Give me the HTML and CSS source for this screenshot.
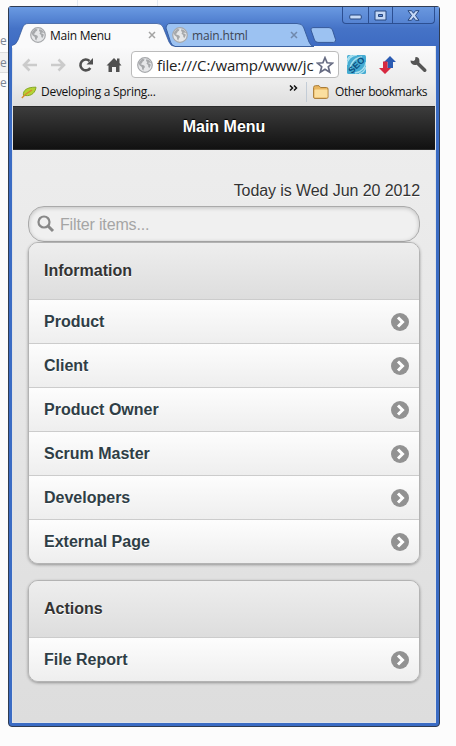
FILE: index.html
```html
<!DOCTYPE html>
<html lang="en">
<head>
    <meta charset="UTF-8">
    <meta name="viewport" content="width=device-width, initial-scale=1.0">
    <title>Main Menu</title>
    <link rel="stylesheet" href="styles.css">
</head>
<body>
    <svg width="0" height="0" class="defs">
        <symbol id="globe" viewBox="0 0 16 16">
            <circle cx="8" cy="8" r="7.3" fill="#e6e7e9" stroke="#a6a8ab" stroke-width="1.2"/>
            <path d="M2.500 4.500 5 2l2.500.2L7 3.800l-1.500 1-.5 1.500L3.500 7l1.500.8 2.200.7.8 1.500-1 1.300-.8 2.500-1-1.500-.4-2.200L2.500 8.300 1.800 6.500zM9.500 2l3 1.500 1.800 2.700-2.300-.7-.8.7 2.300.8.2 1.500-1.500 2.800-1-1.800V8L9.500 6.800l.8-1.800L9 4z" fill="#a6a8ab"/>
        </symbol>
        <symbol id="close" viewBox="0 0 8 8">
            <path d="M1 1 7 7M7 1 1 7" stroke="currentColor" stroke-width="1.5" fill="none"/>
        </symbol>
        <symbol id="arrow" viewBox="0 0 18 18">
            <circle cx="9" cy="9" r="9" fill="#929292"/>
            <path d="M7 4.500 11.500 9 7 13.500" stroke="#fff" stroke-width="3" fill="none"/>
        </symbol>
    </svg>

    <!-- page behind the window -->
    <div class="behind">
        <span>e</span>
        <span class="shade">e</span>
        <span>e</span>
    </div>

    <div class="window">
        <div class="titlebar">
            <div class="controls">
                <div class="control"><svg width="13" height="6"><rect x=".75" y="1" width="11.500" height="4" rx="1" fill="#c5d9f6" stroke="#27477f"/></svg></div>
                <div class="control mid"><svg width="13" height="11"><path d="M1 1h11v9H1zM4.500 4.500v2h4v-2z" fill="#c5d9f6" stroke="#27477f" fill-rule="evenodd"/></svg></div>
                <div class="control last"><svg width="13" height="11"><path d="M1 .7h3.500l2 2.600 2-2.600H12L8.500 5.500l3.500 4.800H8.500l-2-2.700-2 2.700H1l3.500-4.800z" fill="#c5d9f6" stroke="#27477f"/></svg></div>
            </div>
            <div class="tabs">
                <div class="tab active">
                    <svg class="tab-shape" width="164" height="25"><path d="M0 25v-2.500Q4 22 6 17L10.500 5Q12 .5 16 .5H145Q149.500 .5 151 4L157 19Q159 23.500 163 23.500V25z" fill="#fafafb"/><path d="M0 22.500Q4 22 6 17L10.500 5Q12 .5 16 .5H145Q149.500 .5 151 4L157 19Q159 23.500 163 23.500" fill="none" stroke="#36599a" stroke-opacity=".75"/></svg>
                    <svg class="favicon" width="16" height="16"><use href="#globe"/></svg>
                    <span class="tab-title">Main Menu</span>
                    <svg class="tab-close" width="8" height="8"><use href="#close"/></svg>
                </div>
                <div class="tab other">
                    <svg class="tab-shape" width="152" height="24"><path d="M1 5Q1.500 .5 5 .5H132Q137 .5 138.500 4L144 19Q146 23.500 149 23.500H10Q7 23 5.500 19z" fill="#9cc2f2" stroke="#3b609f"/></svg>
                    <svg class="favicon" width="16" height="16"><use href="#globe"/></svg>
                    <span class="tab-title">main.html</span>
                    <svg class="tab-close" width="8" height="8"><use href="#close"/></svg>
                </div>
                <svg class="new-tab" width="27" height="16"><path d="M3 .6H19Q21.500.6 22.500 3L25.600 12.500Q26 15.400 23.500 15.400H8Q5.500 15.400 4.500 13L1 3Q.500 .6 3 .6z" fill="#9cc2f2" stroke="#36599a"/></svg>
            </div>
        </div>

        <div class="browser">
            <div class="toolbar">
                <svg class="nav" width="16" height="14"><path d="M7.500 1.500 2 7l5.500 5.500M2 7h13" fill="none" stroke="#cbcbcb" stroke-width="2.600"/></svg>
                <svg class="nav forward" width="16" height="14"><path d="M8.500 1.500 14 7l-5.500 5.500M14 7H1" fill="none" stroke="#cbcbcb" stroke-width="2.600"/></svg>
                <svg class="nav reload" width="16" height="16"><path d="M12.300 11A5.400 5.400 0 1 1 11.500 4" fill="none" stroke="#505050" stroke-width="2.600"/><path d="M15 1v6.500H8.500z" fill="#505050"/></svg>
                <svg class="nav home" width="16" height="16"><path d="M8 1 .5 8.500h2V15H6v-5h4v5h3.500V8.500h2L13.500 6V1.500H11V4z" fill="#505050"/></svg>
                <div class="address">
                    <svg width="16" height="16"><use href="#globe"/></svg>
                    <span class="url">file:///C:/wamp/www/jc</span>
                    <svg class="star" width="18" height="18"><path d="M9 1.700l2.100 5.100 5.400.4-4.200 3.500 1.400 5.400L9 13.200l-4.700 2.900 1.400-5.400L1.500 7.200l5.400-.4z" fill="#fff" stroke="#666b82" stroke-width="1.700"/></svg>
                </div>
                <svg class="ext" width="19" height="19">
                    <rect width="19" height="19" rx="1.500" fill="#45abd2"/>
                    <path d="M0 10A10 10 0 0 1 10 0M0 5A9 9 0 0 1 5 0M3 14A13 13 0 0 1 15 2M8 18A12 12 0 0 0 19 7M12 19A10 10 0 0 0 19 12" stroke="#a9e0ef" stroke-width="1.300" fill="none"/>
                    <text class="seo" x="-10" y="3.500" transform="translate(9.500 9.500) rotate(-45)">SEO</text>
                </svg>
                <svg class="ext updown" width="17" height="18"><path d="M11 0l6 6h-3v6H8.500V6H5z" fill="#2b5bb2"/><path d="M4 5.500h4.500V12H12l-6 6-6-6h4z" fill="#d72840"/></svg>
                <svg class="ext wrench" width="17" height="17"><path d="M5.500 1 5 4 3.500 5 .5 4.500C.5 8 3.500 9.800 6.700 8.800L13.500 15.500Q14.700 16.600 15.900 15.500T16 13L9.300 6.500C10 3 8.500 .8 5.500 1z" fill="#555"/></svg>
            </div>
            <div class="bookmarks">
                <svg class="leaf" width="16" height="14"><path d="M2.500 10.500C1.500 5.500 6 2 15 2.200 14.500 7 11 11.500 4 10.500z" fill="#b5d334" stroke="#86a825"/><path d="M.8 13 5 9l6-4" fill="none" stroke="#d98a2c" stroke-width="1.300"/></svg>
                <span class="spring">Developing a Spring...</span>
                <svg class="more" width="9" height="7"><path d="M1 .5 3.500 3 1 5.500M5 .5 7.500 3 5 5.500" fill="none" stroke="#111" stroke-width="1.500"/></svg>
                <i class="sep"></i>
                <svg class="folder" width="16" height="14"><path d="M.6 12V2.500Q.6.700 2.500.700H6L7.500 2.500h6Q15 2.500 15 4v8q0 1.400-1.500 1.400H2Q.6 13.400.6 12z" fill="#e9b65f" stroke="#a97c37"/><path d="M1.500 12.500V5.500q0-1 1-1H14.500V12.500z" fill="#fbdf9f"/></svg>
                <span class="others">Other bookmarks</span>
            </div>

            <div class="page">
                <div class="header">Main Menu</div>
                <div class="content">
                    <div class="today">Today is Wed Jun 20 2012</div>
                    <div class="search">
                        <svg width="18" height="18"><circle cx="7" cy="7" r="5.500" fill="none" stroke="#888" stroke-width="2.200"/><path d="M11 11l5 5" stroke="#888" stroke-width="3"/></svg>
                        <span>Filter items...</span>
                    </div>
                    <div class="list">
                        <div class="divider">Information</div>
                        <div class="item">Product<svg width="18" height="18"><use href="#arrow"/></svg></div>
                        <div class="item">Client<svg width="18" height="18"><use href="#arrow"/></svg></div>
                        <div class="item">Product Owner<svg width="18" height="18"><use href="#arrow"/></svg></div>
                        <div class="item">Scrum Master<svg width="18" height="18"><use href="#arrow"/></svg></div>
                        <div class="item">Developers<svg width="18" height="18"><use href="#arrow"/></svg></div>
                        <div class="item">External Page<svg width="18" height="18"><use href="#arrow"/></svg></div>
                    </div>
                    <div class="list">
                        <div class="divider">Actions</div>
                        <div class="item">File Report<svg width="18" height="18"><use href="#arrow"/></svg></div>
                    </div>
                </div>
            </div>
        </div>
    </div>
</body>
</html>
```
FILE: styles.css
```css
* {
    box-sizing: border-box;
}
body {
    margin: 0;
    height: 746px;
    padding: 6px 0 0 8px;
    overflow: hidden;
    background: #fcfcfc;
    font-family: "Liberation Sans", Arial, sans-serif;
}
svg {
    display: block;
    flex: none;
}
.defs {
    position: absolute;
}
.behind {
    position: absolute;
    top: 0;
    left: 0;
    width: 158px;
    height: 110px;
    padding-top: 31px;
    background: linear-gradient(#e3eaf2, #e3eaf2) 77px 0 / 1px 6px no-repeat;
    border-right: 1px solid #e3eaf2;
    font: 12px/20px "Open Sans", sans-serif;
    color: #7d8793;
}
.behind span {
    display: block;
    width: 8px;
    height: 21px;
}
.behind .shade {
    background: #f2f2f2;
    border-top: 1px solid #ddd;
    border-bottom: 1px solid #ddd;
}
.window {
    position: relative;
    display: flex;
    flex-direction: column;
    width: 432px;
    height: 721px;
    padding: 0 3px 3px;
    border: 1px solid #303c52;
    border-radius: 3px 3px 4px 4px;
    background: #3b6cc4;
    font-family: "Open Sans", "Noto Sans", sans-serif;
}

/* title bar and tabs */
.titlebar {
    position: relative;
    height: 39px;
    flex: none;
    margin: 0 -3px;
    padding: 16px 0 0 3px;
    background: linear-gradient(#6a9ae2, #4573c7 55%, #3e6bc2);
}
.controls {
    position: absolute;
    top: 0;
    right: 4px;
    display: flex;
    height: 17px;
    border: 1px solid #2c4f92;
    border-top: 0;
    border-radius: 0 0 4px 4px;
    background: linear-gradient(#6a98df, #5583d2);
}
.control {
    width: 25px;
    display: flex;
    align-items: center;
    justify-content: center;
}
.control:first-child {
    padding-top: 4px;
}
.control.mid {
    border-left: 1px solid #2c4f92;
    border-right: 1px solid #2c4f92;
}
.control.last {
    width: 41px;
}
.tabs {
    display: flex;
}
.tab {
    position: relative;
    display: flex;
    align-items: center;
    height: 24px;
    font-size: 12px;
    color: #111;
}
.tab.active {
    z-index: 2;
    width: 153px;
    padding-left: 18px;
}
.tab.other {
    width: 144px;
    padding-left: 7px;
    color: #3d4654;
}
.tab-shape {
    position: absolute;
    top: 0;
    left: 0;
}
.favicon {
    position: relative;
}
.tab-title {
    position: relative;
    margin-left: 4px;
    letter-spacing: -.25px;
}
.other .tab-title {
    letter-spacing: -.15px;
}
.tab-close {
    position: relative;
    margin-left: auto;
    color: #a3a3a3;
}
.active .tab-close {
    margin-right: 9px;
}
.other .tab-close {
    margin-right: 11px;
    color: #7089ad;
}
.new-tab {
    margin: 4px 0 0 1px;
}

/* toolbar */
.browser {
    flex: 1;
    display: flex;
    flex-direction: column;
    border: solid #dfe3e8;
    border-width: 0 1px 1px;
}
.toolbar {
    display: flex;
    align-items: center;
    height: 37px;
    padding: 0 10px 0 9px;
    background: linear-gradient(#fafafb, #ececec);
}
.forward {
    margin-left: 12px;
}
.reload {
    margin-left: 12px;
}
.home {
    margin-left: 12px;
}
.address {
    display: flex;
    align-items: center;
    width: 208px;
    height: 27px;
    margin-left: 9px;
    padding: 0 4px 0 5px;
    background: #fff;
    border: 1px solid #bbb;
    border-radius: 4px;
}
.url {
    width: 160px;
    margin-left: 4px;
    overflow: hidden;
    white-space: nowrap;
    font-size: 15px;
    line-height: 22px;
    letter-spacing: -.17px;
    color: #222;
}
.ext {
    margin-left: 8px;
}
.seo {
    font: bold 9px "Liberation Sans", sans-serif;
    fill: #0b4f80;
}
.updown {
    margin-left: 13px;
}
.wrench {
    margin-left: 14px;
}
.bookmarks {
    display: flex;
    align-items: center;
    height: 23px;
    padding: 0 0 6px 8px;
    background: linear-gradient(#ececec, #dedede);
    font-size: 12px;
    line-height: 16px;
    color: #111;
    white-space: nowrap;
}
.leaf {
    margin-top: 1px;
}
.spring {
    width: 248px;
    margin-left: 4px;
    letter-spacing: -.28px;
}
.more {
    margin-bottom: 7px;
}
.sep {
    width: 1px;
    height: 20px;
    margin: 0 6px 0 8px;
    background: #c3ccd6;
}
.others {
    margin-left: 6px;
    letter-spacing: -.43px;
}

/* mobile page */
.page {
    flex: 1;
    display: flex;
    flex-direction: column;
    font: 16px "Liberation Sans", Arial, sans-serif;
    color: #333;
    background: linear-gradient(#eee, #ddd);
}
.header {
    height: 44px;
    border: solid #2a2a2a;
    border-width: 1px 0;
    background: linear-gradient(#3c3c3c, #111);
    color: #fff;
    font-weight: bold;
    line-height: 39px;
    text-align: center;
    text-shadow: 0 -1px 1px #000;
}
.content {
    padding: 31px 15px 0;
    text-shadow: 0 1px 0 #fff;
}
.today {
    height: 25px;
    line-height: 20px;
    letter-spacing: -.08px;
    text-align: right;
}
.search {
    display: flex;
    align-items: center;
    height: 36px;
    padding-left: 8px;
    border: 1px solid #aaa;
    border-radius: 16px;
    background: #f0f0f0;
    box-shadow: inset 0 1px 4px rgba(0, 0, 0, .2);
    color: #a5a5a5;
    text-shadow: none;
}
.search span {
    margin: 2px 0 0 5px;
    letter-spacing: -.15px;
}
.list {
    margin-bottom: 16px;
    border: 1px solid #b3b3b3;
    border-radius: 10px;
    box-shadow: 0 1px 3px rgba(0, 0, 0, .35);
    overflow: hidden;
    font-weight: bold;
}
.divider {
    height: 56px;
    padding-left: 15px;
    line-height: 55px;
    background: linear-gradient(#eee, #ddd);
}
.item {
    display: flex;
    align-items: center;
    justify-content: space-between;
    height: 44px;
    padding: 0 10px 0 15px;
    border-top: 1px solid #ccc;
    background: linear-gradient(#fdfdfd, #eee);
    color: #2f3e46;
}
```
